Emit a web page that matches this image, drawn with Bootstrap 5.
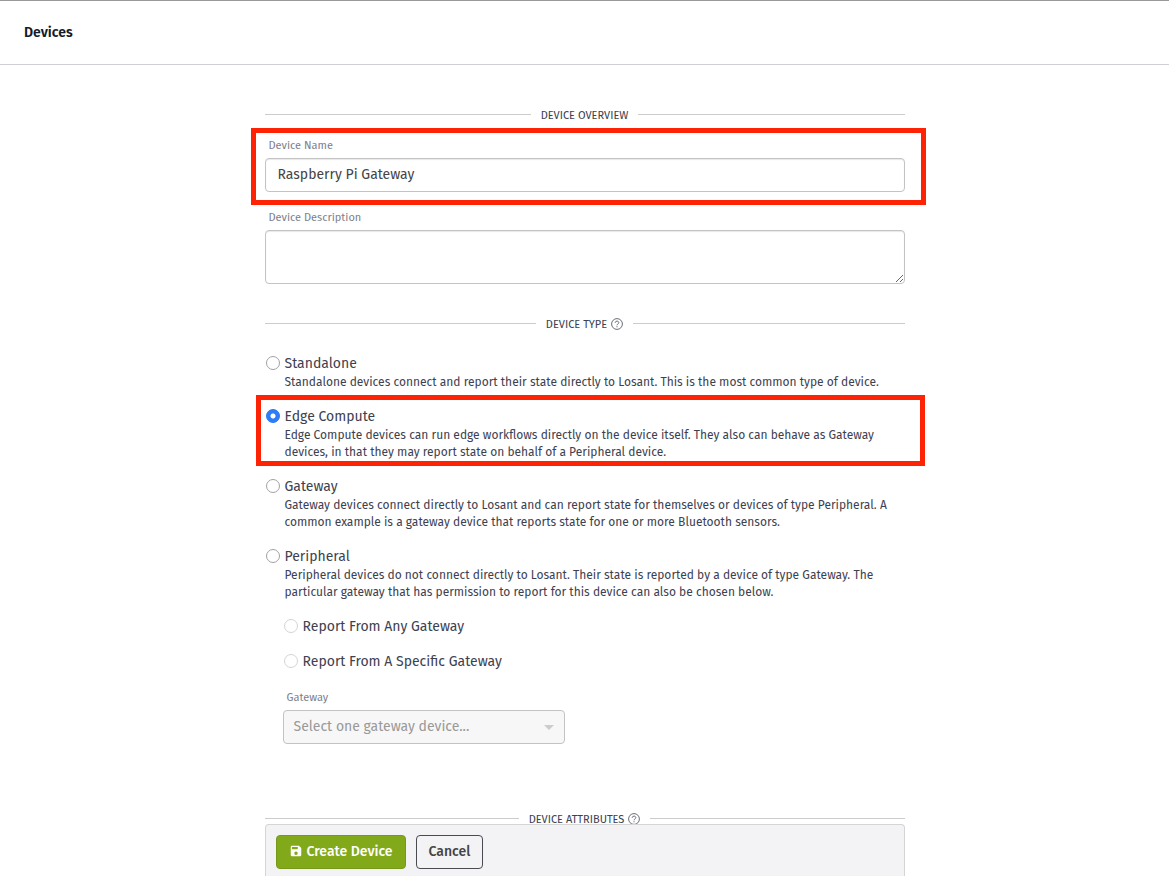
<!DOCTYPE html>
<html lang="en">
<head>
<meta charset="utf-8">
<meta name="viewport" content="width=device-width, initial-scale=1">
<title>Devices</title>
<link href="https://cdn.jsdelivr.net/npm/bootstrap@5.3.0/dist/css/bootstrap.min.css" rel="stylesheet">
<style>
  body { font-family: "Fira Sans", "Noto Sans", sans-serif; font-size: 14px; line-height: 20px; color: #3d4150; background: #fff; }
  .page-header { border-top: 1px solid #999; border-bottom: 1px solid #cfcfd6; padding: 22px 24px 21px; }
  .page-header h1 { font-size: 14px; line-height: 20px; font-weight: 600; color: #151a2b; }
  .form-column { width: 100%; max-width: 640px; }
  main { padding-top: 42px; padding-bottom: 40px; }
  .section-title { font-size: 11px; line-height: 18px; font-weight: 400; gap: 10px; margin: 0 0 12px; text-transform: uppercase; }
  .section-title::before, .section-title::after { content: ""; flex: 1; border-top: 1px solid #ccc; margin-bottom: 3px; }
  .section-title svg { margin-bottom: 2px; }
  .title-type { margin: 32px 0 20px; }
  .title-attributes { margin-top: 67px; }
  .field-label { display: block; font-size: 11px; line-height: 18px; color: #7d808b; margin: 0 0 3px 4px; }
  .form-control, .form-select { font-size: 14px; line-height: 20px; border-color: #c3c3c3; border-radius: 4px; color: #444; padding: 6px 12px; box-shadow: inset 0 1px 1px #e8e8e8; }
  .form-select { padding-left: 10px; background-size: 10px 5px; background-position: right 10px center;
    background-image: url("data:image/svg+xml,%3csvg xmlns='http://www.w3.org/2000/svg' viewBox='0 0 10 5'%3e%3cpath fill='%23ccc' d='M0 0h10L5 5z'/%3e%3c/svg%3e"); }
  .form-select:disabled { background-color: #f7f7f7; border-color: #c3c3c3; color: #999; opacity: 1; box-shadow: none; }
  textarea.form-control { height: 54px; min-height: 54px; }
  .field-next { margin-top: 17px; }
  .choice { display: grid; grid-template-columns: 14px 1fr; column-gap: 5px; padding-left: 1px; }
  .choice p { grid-column: 2; font-size: 12px; line-height: 17px; margin: 0; }
  .choice input { appearance: none; width: 14px; height: 14px; margin: 2px 0 0; border: 1px solid #a2a2a2; border-radius: 50%; background: #fff; }
  .choice input:checked { border-color: #2f7cf6; background: #2f7cf6 radial-gradient(circle, #fff 2px, #2f7cf6 3px); }
  .choice input:disabled { border-color: #d4d4d4; }
  .choices { display: flex; flex-direction: column; gap: 16px; }
  .sub-choices { gap: 15px; margin: 16px 0 0 18px; }
  .gateway-field { max-width: 282px; margin: 2px 0 0; }
  .highlight { position: relative; }
  .highlight::after { content: ""; position: absolute; border: 5px solid #ff2305; pointer-events: none; }
  .highlight-field::after { inset: -9px -21px -13px -14px; }
  .highlight-choice::after { inset: -12px -20px -5px -9px; }
  .action-bar { background: #f3f3f5; border: 1px solid #d5d5d5; border-bottom: 0; border-radius: 4px 4px 0 0; padding: 10px 10px 7px; gap: 10px; }
  .action-bar .btn { font-size: 14px; line-height: 20px; font-weight: 500; padding: 6px 12px; border-radius: 4px; }
  .action-bar .btn-create { background: #82a91a; border-color: #76991a; color: #fff; gap: 4px; }
  .btn-create svg { margin-bottom: 2px; }
  .action-bar .btn-cancel { border-color: #4a4a50; color: #444; }
</style>
</head>
<body>
<header class="page-header"><h1 class="m-0">Devices</h1></header>

<main class="form-column mx-auto">
  <form id="device-form">
    <h2 class="section-title d-flex align-items-center">Device Overview</h2>
    <div class="highlight highlight-field">
      <label class="field-label" for="name">Device Name</label>
      <input class="form-control" id="name" type="text" value="Raspberry Pi Gateway">
    </div>
    <div class="field-next">
      <label class="field-label" for="description">Device Description</label>
      <textarea class="form-control" id="description"></textarea>
    </div>

    <h2 class="section-title title-type d-flex align-items-center"><span class="d-flex align-items-center gap-1">Device Type
      <svg width="12" height="12" viewBox="0 0 12 12" fill="none" stroke="#6b6e79"><circle cx="6" cy="6" r="5.4"/><path d="M4.2 4.8c0-2.3 3.6-2.2 3.6-.1C7.8 5.9 6 5.9 6 7.3M6 8.2v1.1"/></svg></span></h2>

    <div class="choices">
      <div class="choice">
        <input type="radio" name="type" id="standalone"><label for="standalone">Standalone</label>
        <p>Standalone devices connect and report their state directly to Losant. This is the most common type of device.</p>
      </div>
      <div class="choice highlight highlight-choice">
        <input type="radio" name="type" id="edge" checked><label for="edge">Edge Compute</label>
        <p>Edge Compute devices can run edge workflows directly on the device itself. They also can behave as Gateway devices, in that they may report state on behalf of a Peripheral device.</p>
      </div>
      <div class="choice">
        <input type="radio" name="type" id="gateway"><label for="gateway">Gateway</label>
        <p>Gateway devices connect directly to Losant and can report state for themselves or devices of type Peripheral. A common example is a gateway device that reports state for one or more Bluetooth sensors.</p>
      </div>
      <div class="choice">
        <input type="radio" name="type" id="peripheral"><label for="peripheral">Peripheral</label>
        <p>Peripheral devices do not connect directly to Losant. Their state is reported by a device of type Gateway. The particular gateway that has permission to report for this device can also be chosen below.</p>
      </div>
    </div>

    <div class="choices sub-choices">
      <div class="choice">
        <input type="radio" name="source" id="any" disabled><label for="any">Report From Any Gateway</label>
      </div>
      <div class="choice">
        <input type="radio" name="source" id="specific" disabled><label for="specific">Report From A Specific Gateway</label>
      </div>
      <div class="gateway-field">
        <label class="field-label" for="gateway-select">Gateway</label>
        <select class="form-select" id="gateway-select" disabled><option>Select one gateway device...</option></select>
      </div>
    </div>

    <h2 class="section-title title-attributes d-flex align-items-center"><span class="d-flex align-items-center gap-1">Device Attributes
      <svg width="12" height="12" viewBox="0 0 12 12" fill="none" stroke="#6b6e79"><circle cx="6" cy="6" r="5.4"/><path d="M4.2 4.8c0-2.3 3.6-2.2 3.6-.1C7.8 5.9 6 5.9 6 7.3M6 8.2v1.1"/></svg></span></h2>
  </form>
</main>

<footer class="fixed-bottom pe-none">
  <div class="action-bar form-column mx-auto d-flex pe-auto">
    <button class="btn btn-create d-flex align-items-center" type="submit" form="device-form">
      <svg width="14" height="14" viewBox="0 0 24 24" fill="#fff"><path d="M17 3H5a2 2 0 0 0-2 2v14a2 2 0 0 0 2 2h14a2 2 0 0 0 2-2V7l-4-4zm-5 16a3 3 0 1 1 0-6 3 3 0 0 1 0 6zm3-10H5V5h10v4z"/></svg>
      Create Device
    </button>
    <button class="btn btn-cancel" type="button">Cancel</button>
  </div>
</footer>
<script src="https://cdn.jsdelivr.net/npm/bootstrap@5.3.0/dist/js/bootstrap.bundle.min.js"></script>
</body>
</html>
